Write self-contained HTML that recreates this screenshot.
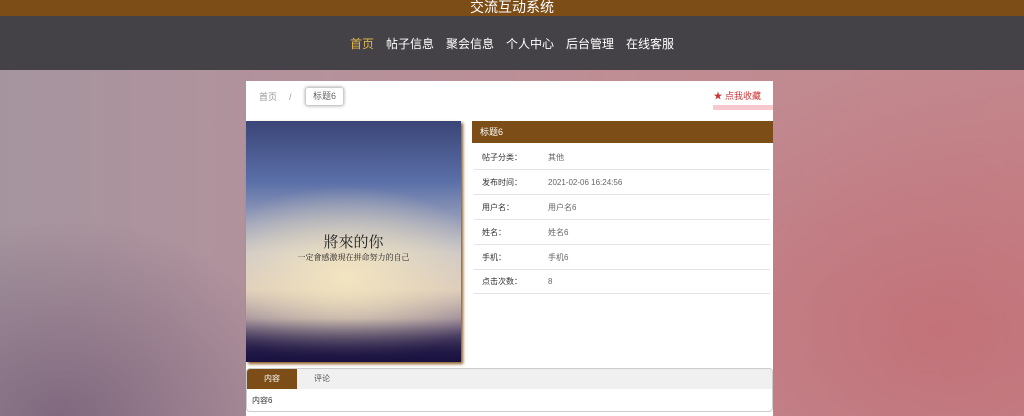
<!DOCTYPE html>
<html><head><meta charset="utf-8"><style>
*{margin:0;padding:0;box-sizing:border-box}
body{width:1024px;height:416px;overflow:hidden;font-family:"Liberation Sans","Noto Sans CJK SC",sans-serif;position:relative;
background:
radial-gradient(ellipse 380px 260px at 940px 330px,rgba(195,105,112,.7),rgba(195,105,112,0)),
radial-gradient(ellipse 260px 200px at 60px 420px,rgba(100,75,105,.6),rgba(100,75,105,0)),
linear-gradient(90deg,#a5949e 0%,#b4929c 30%,#bf8d94 60%,#c3868c 100%);}
.top{position:absolute;left:0;top:0;width:1024px;height:16px;background:#7c4d17;color:#fff;text-align:center;font-size:14px;line-height:14px;overflow:hidden}
.nav{position:absolute;left:0;top:16px;width:1024px;height:54px;background:#454247;text-align:center;font-size:12px;color:#fff;line-height:56px}
.nav span{margin:0 6px}
.card{position:absolute;left:246px;top:81px;width:527px;height:335px;background:#fff}
.bc{position:absolute;left:0;top:0;width:527px;height:30px;font-size:9px;color:#999;line-height:12px}
.tag{position:absolute;left:59px;top:6px;width:39px;height:19px;border:1px solid #ccc;border-radius:3px;box-shadow:0 0 3px #aaa;font-size:9px;color:#666;text-align:center;line-height:17px}
.fav{position:absolute;right:12px;top:9px;font-size:9px;color:#c33}
.favline{position:absolute;right:0;top:24px;width:60px;height:5px;background:#f7c9cf}
.img{position:absolute;left:0;top:40px;width:215px;height:241px;box-shadow:2px 2px 3px #8a5a20;
background:
linear-gradient(180deg,rgba(0,0,0,0) 82%,#1a1240 100%),
radial-gradient(ellipse 150px 90px at 100px 155px,#f3e5c0,rgba(243,229,192,0) ),
linear-gradient(180deg,#3b4577 0%,#5a6fa8 25%,#c8c4c8 55%,#d9c7b8 70%,#8b7a8f 85%,#1c1444 100%);}
.imgt{position:absolute;left:0;top:110px;width:215px;text-align:center;font-family:"Noto Serif CJK SC",serif;color:#222}
.hd{position:absolute;left:226px;top:40px;width:301px;height:22px;background:#7c4d17;color:#fff;font-size:9px;line-height:22px;padding-left:8px}
.row{position:absolute;left:228px;width:296px;height:25px;border-bottom:1px solid #e4e4e4;font-size:8px;color:#333;line-height:25px}
.row b{font-weight:normal;position:absolute;left:8px}
.row i{font-style:normal;position:absolute;left:74px;color:#666}
.tabs{position:absolute;left:0;top:287px;width:527px;height:44px;border:1px solid #ccc;border-radius:4px;overflow:hidden}
.tb{height:20px;background:#f0f0f0;font-size:8px;line-height:20px}
.tb span{display:inline-block;width:50px;text-align:center;color:#555}
.tb span.a{background:#7c4d17;color:#fff}
.ct{font-size:8px;color:#333;padding:6px 5px}
</style></head><body>
<div class="top">交流互动系统</div>
<div class="nav"><span style="color:#e2b84a">首页</span><span>帖子信息</span><span>聚会信息</span><span>个人中心</span><span>后台管理</span><span>在线客服</span></div>
<div class="card">
<div class="bc"><span style="position:absolute;left:13px;top:10px">首页</span><span style="position:absolute;left:43px;top:10px">/</span><div class="tag">标题6</div><div class="fav">★ 点我收藏</div><div class="favline"></div></div>
<div class="img"><div class="imgt"><div style="font-size:15px">將來的你</div><div style="font-size:8px">一定會感激現在拼命努力的自己</div></div></div>
<div class="hd">标题6</div>
<div class="row" style="top:64px"><b>帖子分类：</b><i>其他</i></div>
<div class="row" style="top:89px"><b>发布时间：</b><i>2021-02-06 16:24:56</i></div>
<div class="row" style="top:114px"><b>用户名：</b><i>用户名6</i></div>
<div class="row" style="top:139px"><b>姓名：</b><i>姓名6</i></div>
<div class="row" style="top:164px"><b>手机：</b><i>手机6</i></div>
<div class="row" style="top:188px"><b>点击次数：</b><i>8</i></div>
<div class="tabs"><div class="tb"><span class="a">内容</span><span>评论</span></div><div class="ct">内容6</div></div>
</div>
</body></html>
